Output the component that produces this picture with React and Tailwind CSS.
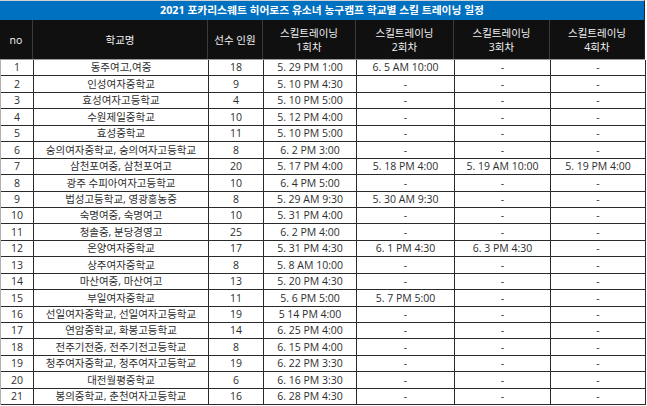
import React from "react";

const rows = [
  ["1", "동주여고,여중", "18", "5. 29 PM 1:00", "6. 5 AM 10:00", "-", "-"],
  ["2", "인성여자중학교", "9", "5. 10 PM 4:30", "-", "-", "-"],
  ["3", "효성여자고등학교", "4", "5. 10 PM 5:00", "-", "-", "-"],
  ["4", "수원제일중학교", "10", "5. 12 PM 4:00", "-", "-", "-"],
  ["5", "효성중학교", "11", "5. 10 PM 5:00", "-", "-", "-"],
  ["6", "숭의여자중학교, 숭의여자고등학교", "8", "6. 2 PM 3:00", "-", "-", "-"],
  ["7", "삼천포여중, 삼천포여고", "20", "5. 17 PM 4:00", "5. 18 PM 4:00", "5. 19 AM 10:00", "5. 19 PM 4:00"],
  ["8", "광주 수피아여자고등학교", "10", "6. 4 PM 5:00", "-", "-", "-"],
  ["9", "법성고등학교, 영광홍농중", "8", "5. 29 AM 9:30", "5. 30 AM 9:30", "-", "-"],
  ["10", "숙명여중, 숙명여고", "10", "5. 31 PM 4:00", "-", "-", "-"],
  ["11", "청솔중, 분당경영고", "25", "6. 2 PM 4:00", "-", "-", "-"],
  ["12", "온양여자중학교", "17", "5. 31 PM 4:30", "6. 1 PM 4:30", "6. 3 PM 4:30", "-"],
  ["13", "상주여자중학교", "8", "5. 8 AM 10:00", "-", "-", "-"],
  ["14", "마산여중, 마산여고", "13", "5. 20 PM 4:30", "-", "-", "-"],
  ["15", "부일여자중학교", "11", "5. 6 PM 5:00", "5. 7 PM 5:00", "-", "-"],
  ["16", "선일여자중학교, 선일여자고등학교", "19", "5 14 PM 4:00", "-", "-", "-"],
  ["17", "연암중학교, 화봉고등학교", "14", "6. 25 PM 4:00", "-", "-", "-"],
  ["18", "전주기전중, 전주기전고등학교", "8", "6. 15 PM 4:00", "-", "-", "-"],
  ["19", "청주여자중학교, 청주여자고등학교", "19", "6. 22 PM 3:30", "-", "-", "-"],
  ["20", "대전월평중학교", "6", "6. 16 PM 3:30", "-", "-", "-"],
  ["21", "봉의중학교, 춘천여자고등학교", "16", "6. 28 PM 4:30", "-", "-", "-"],
];

const headers = [
  ["no"],
  ["학교명"],
  ["선수 인원"],
  ["스킬트레이닝", "1회차"],
  ["스킬트레이닝", "2회차"],
  ["스킬트레이닝", "3회차"],
  ["스킬트레이닝", "4회차"],
];

const cols = "grid grid-cols-[33px_175px_55px_93px_98px_96px_95px]";

export default function App() {
  return (
    <div
      className="w-[647px] h-[406px] bg-white overflow-hidden"
      style={{ fontFamily: '"Open Sans", "Noto Sans CJK KR", sans-serif' }}
    >
      <div className="w-[645px]">
        <div className="h-[20px] border-t border-[#d0d0d0] border-r border-r-[#222] bg-[#0070c0] flex items-center justify-center text-white text-[10.75px] font-bold leading-none">
          2021 포카리스웨트 히어로즈 유소녀 농구캠프 학교별 스킬 트레이닝 일정
        </div>
        <div className={`${cols} h-[40px] bg-[#101010] border-b border-[#9a9a9a]`}>
          {headers.map((h, i) => (
            <div
              key={i}
              className={`flex flex-col items-center justify-center text-[10.5px] leading-[14px] text-[#f2f2f2] ${
                i < 6 ? "border-r border-[#3a3a3a]" : "border-r border-[#222]"
              }`}
            >
              {h.map((t, j) => (
                <span key={j}>{t}</span>
              ))}
            </div>
          ))}
        </div>
        <div className={`${cols} auto-rows-[16.45px] border-l border-[#b0b0b0]`}>
          {rows.map((r, ri) =>
            r.map((c, ci) => (
              <div
                key={`${ri}-${ci}`}
                className="flex items-center justify-center border-r border-b border-[#2a2a2a] text-[10.5px] leading-none text-[#2e2e2e] whitespace-nowrap"
              >
                {c}
              </div>
            ))
          )}
        </div>
      </div>
    </div>
  );
}
